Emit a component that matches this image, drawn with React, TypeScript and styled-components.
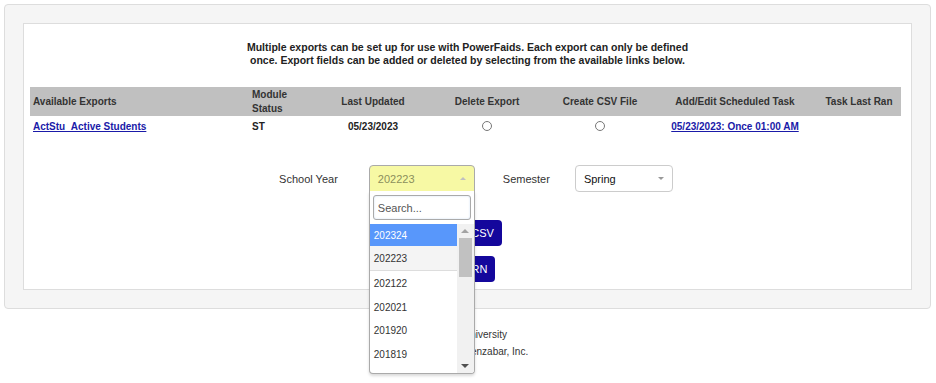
import styled, { createGlobalStyle } from "styled-components";

const GlobalStyle = createGlobalStyle`
  html, body {
    margin: 0;
    min-height: 100%;
  }
  body {
    background: #ffffff;
    font-family: "Liberation Sans", Arial, sans-serif;
    color: #333333;
  }
`;

const yearOptions = ["202324", "202223", "202122", "202021", "201920", "201819"];

const columns = [
  { label: "Available Exports", align: "left" },
  { label: "Module\nStatus", align: "left" },
  { label: "Last Updated", align: "center" },
  { label: "Delete Export", align: "center" },
  { label: "Create CSV File", align: "center" },
  { label: "Add/Edit Scheduled Task", align: "center" },
  { label: "Task Last Ran", align: "center" },
];

function App() {
  return (
    <Page>
      <GlobalStyle />
      <OuterPanel>
        <InnerPanel>
          <Intro>
            Multiple exports can be set up for use with PowerFaids. Each export can only be defined
            <br />
            once. Export fields can be added or deleted by selecting from the available links below.
          </Intro>

          <ExportTable>
            <HeaderRow>
              {columns.map((c) => (
                <HeaderCell key={c.label} $align={c.align}>
                  {c.label}
                </HeaderCell>
              ))}
            </HeaderRow>
            <DataRow>
              <Cell $align="left">
                <TableLink href="#">ActStu_Active Students</TableLink>
              </Cell>
              <Cell $align="left">ST</Cell>
              <Cell $align="center">05/23/2023</Cell>
              <Cell $align="center">
                <Radio type="radio" name="del" />
              </Cell>
              <Cell $align="center">
                <Radio type="radio" name="csv" />
              </Cell>
              <Cell $align="center">
                <TableLink href="#">05/23/2023: Once 01:00 AM</TableLink>
              </Cell>
              <Cell $align="center" />
            </DataRow>
          </ExportTable>

          <FormRow>
            <FieldLabel>School Year</FieldLabel>
            <SelectWrap>
              <SelectBox $open>
                <SelectValue $muted>202223</SelectValue>
                <Caret $up />
              </SelectBox>
              <Dropdown>
                <SearchInput placeholder="Search..." />
                <ListArea>
                  <OptionList>
                    {yearOptions.map((y, i) => (
                      <OptionItem key={y} $active={i === 0} $selected={i === 1}>
                        {y}
                      </OptionItem>
                    ))}
                  </OptionList>
                  <ScrollTrack>
                    <ScrollArrow $up />
                    <ScrollThumb />
                    <ScrollSpacer />
                    <ScrollArrow />
                  </ScrollTrack>
                </ListArea>
              </Dropdown>
            </SelectWrap>
            <FieldLabel $gap>Semester</FieldLabel>
            <SelectBox $width={98}>
              <SelectValue>Spring</SelectValue>
              <Caret />
            </SelectBox>
          </FormRow>

          <ButtonStack>
            <ActionButton>Create CSV</ActionButton>
            <ActionButton>RETURN</ActionButton>
          </ButtonStack>
        </InnerPanel>
      </OuterPanel>

      <Footer>
        <FooterText>
          <div>Ocean University</div>
          <div>© 2023 Jenzabar, Inc.</div>
        </FooterText>
      </Footer>
    </Page>
  );
}

export default App;

const Page = styled.div`
  min-height: 383px;
  box-sizing: border-box;
  padding: 4px 5px 0 4px;
`;

const OuterPanel = styled.div`
  width: 927px;
  box-sizing: border-box;
  background: #f5f5f5;
  border: 1px solid #dddddd;
  border-radius: 4px;
  padding: 18px;
`;

const InnerPanel = styled.div`
  background: #ffffff;
  border: 1px solid #dddddd;
  height: 267px;
  box-sizing: border-box;
  padding: 17px 0 0;
`;

const Intro = styled.div`
  text-align: center;
  font-size: 10.5px;
  font-weight: bold;
  line-height: 13px;
  color: #222222;
  white-space: nowrap;
`;

const ExportTable = styled.div`
  margin: 20px 0 0 6px;
  width: 871px;
`;

const gridCols = "219px 70px 108px 120px 106px 164px 84px";

const HeaderRow = styled.div`
  display: grid;
  grid-template-columns: ${gridCols};
  height: 29px;
  align-items: center;
  background: #c0c0c0;
`;

const HeaderCell = styled.div<{ $align: string }>`
  font-size: 10px;
  font-weight: bold;
  line-height: 14px;
  color: #333333;
  white-space: pre-line;
  text-align: ${(p) => p.$align};
  padding-left: ${(p) => (p.$align === "left" ? "3px" : "0")};
`;

const DataRow = styled.div`
  display: grid;
  grid-template-columns: ${gridCols};
  height: 20px;
  align-items: center;
`;

const Cell = styled.div<{ $align: string }>`
  font-size: 10px;
  font-weight: bold;
  color: #222222;
  padding-left: ${(p) => (p.$align === "left" ? "3px" : "0")};
  display: flex;
  align-items: center;
  justify-content: ${(p) => (p.$align === "left" ? "flex-start" : "center")};
`;

const TableLink = styled.a`
  color: #1a1aa8;
  font-weight: bold;
  text-decoration: underline;
`;

const Radio = styled.input`
  width: 10px;
  height: 10px;
  margin: 0;
  accent-color: #888888;
`;

const FormRow = styled.div`
  display: flex;
  align-items: center;
  justify-content: center;
  padding-left: 17px;
  margin-top: 29px;
`;

const FieldLabel = styled.span<{ $gap?: boolean }>`
  font-size: 11px;
  color: #333333;
  margin-left: ${(p) => (p.$gap ? "28px" : "0")};
  margin-right: ${(p) => (p.$gap ? "25px" : "31px")};
`;

const SelectWrap = styled.div`
  position: relative;
`;

const SelectBox = styled.div<{ $open?: boolean; $width?: number }>`
  width: ${(p) => p.$width ?? 106}px;
  height: 27px;
  box-sizing: border-box;
  display: flex;
  align-items: center;
  justify-content: space-between;
  padding: 0 8px;
  border: 1px solid ${(p) => (p.$open ? "#aaaaaa" : "#cccccc")};
  border-radius: ${(p) => (p.$open ? "4px 4px 0 0" : "4px")};
  background: ${(p) => (p.$open ? "#f7f9a4" : "#ffffff")};
`;

const SelectValue = styled.span<{ $muted?: boolean }>`
  font-size: 11px;
  color: ${(p) => (p.$muted ? "#8c8f5c" : "#111111")};
`;

const Caret = styled.span<{ $up?: boolean }>`
  width: 0;
  height: 0;
  border-left: 3px solid transparent;
  border-right: 3px solid transparent;
  ${(p) =>
    p.$up ? "border-bottom: 3px solid #c0c0c0;" : "border-top: 3px solid #999999;"}
`;

const Dropdown = styled.div`
  position: absolute;
  top: 100%;
  left: 0;
  width: 106px;
  height: 183px;
  box-sizing: border-box;
  margin-top: -1px;
  background: #ffffff;
  border: 1px solid #aaaaaa;
  border-top: none;
  border-radius: 0 0 4px 4px;
  box-shadow: 0 2px 3px rgba(0, 0, 0, 0.15);
  z-index: 10;
  display: flex;
  flex-direction: column;
  overflow: hidden;
`;

const SearchInput = styled.input`
  margin: 4px 3px 4px 3px;
  height: 25px;
  box-sizing: border-box;
  border: 1px solid #aaaaaa;
  border-radius: 3px;
  padding: 0 4px;
  font-family: "Liberation Sans", Arial, sans-serif;
  font-size: 11px;
  color: #333333;
  outline: none;
  box-shadow: inset 0 0 2px rgba(80, 140, 220, 0.3);

  &::placeholder {
    color: #555555;
  }
`;

const ListArea = styled.div`
  flex: 1;
  display: flex;
  min-height: 0;
`;

const OptionList = styled.div`
  flex: 1;
  display: flex;
  flex-direction: column;
`;

const OptionItem = styled.div<{ $active?: boolean; $selected?: boolean }>`
  height: ${(p) => (p.$active ? "22px" : p.$selected ? "25px" : "23.5px")};
  flex-shrink: 0;
  box-sizing: border-box;
  display: flex;
  align-items: center;
  padding-left: 4px;
  font-size: 10px;
  color: ${(p) => (p.$active ? "#ffffff" : "#333333")};
  background: ${(p) => (p.$active ? "#5897fb" : p.$selected ? "#f4f4f4" : "#ffffff")};
  border-bottom: ${(p) => (p.$selected ? "1px solid #dddddd" : "none")};
  margin-bottom: ${(p) => (p.$selected ? "1px" : "0")};
`;

const ScrollTrack = styled.div`
  width: 17px;
  background: #f1f1f1;
  display: flex;
  flex-direction: column;
  align-items: center;
`;

const ScrollArrow = styled.span<{ $up?: boolean }>`
  width: 0;
  height: 0;
  margin: 5px 0;
  border-left: 4px solid transparent;
  border-right: 4px solid transparent;
  ${(p) =>
    p.$up ? "border-bottom: 4px solid #a3a3a3;" : "border-top: 4px solid #505050;"}
`;

const ScrollThumb = styled.div`
  width: 13px;
  height: 39px;
  background: #c1c1c1;
`;

const ScrollSpacer = styled.div`
  flex: 1;
`;

const ButtonStack = styled.div`
  display: flex;
  flex-direction: column;
  align-items: center;
  gap: 10px;
  margin-top: 28px;
  padding-right: 6px;
`;

const ActionButton = styled.button`
  height: 26px;
  padding: 0 8px;
  border: none;
  border-radius: 4px;
  background: #14079c;
  color: #ffffff;
  font-family: "Liberation Sans", Arial, sans-serif;
  font-size: 11px;
`;

const Footer = styled.div`
  margin-top: 17px;
  display: flex;
  justify-content: center;
  padding-left: 24px;
`;

const FooterText = styled.div`
  font-size: 10px;
  line-height: 17px;
  color: #333333;
`;
